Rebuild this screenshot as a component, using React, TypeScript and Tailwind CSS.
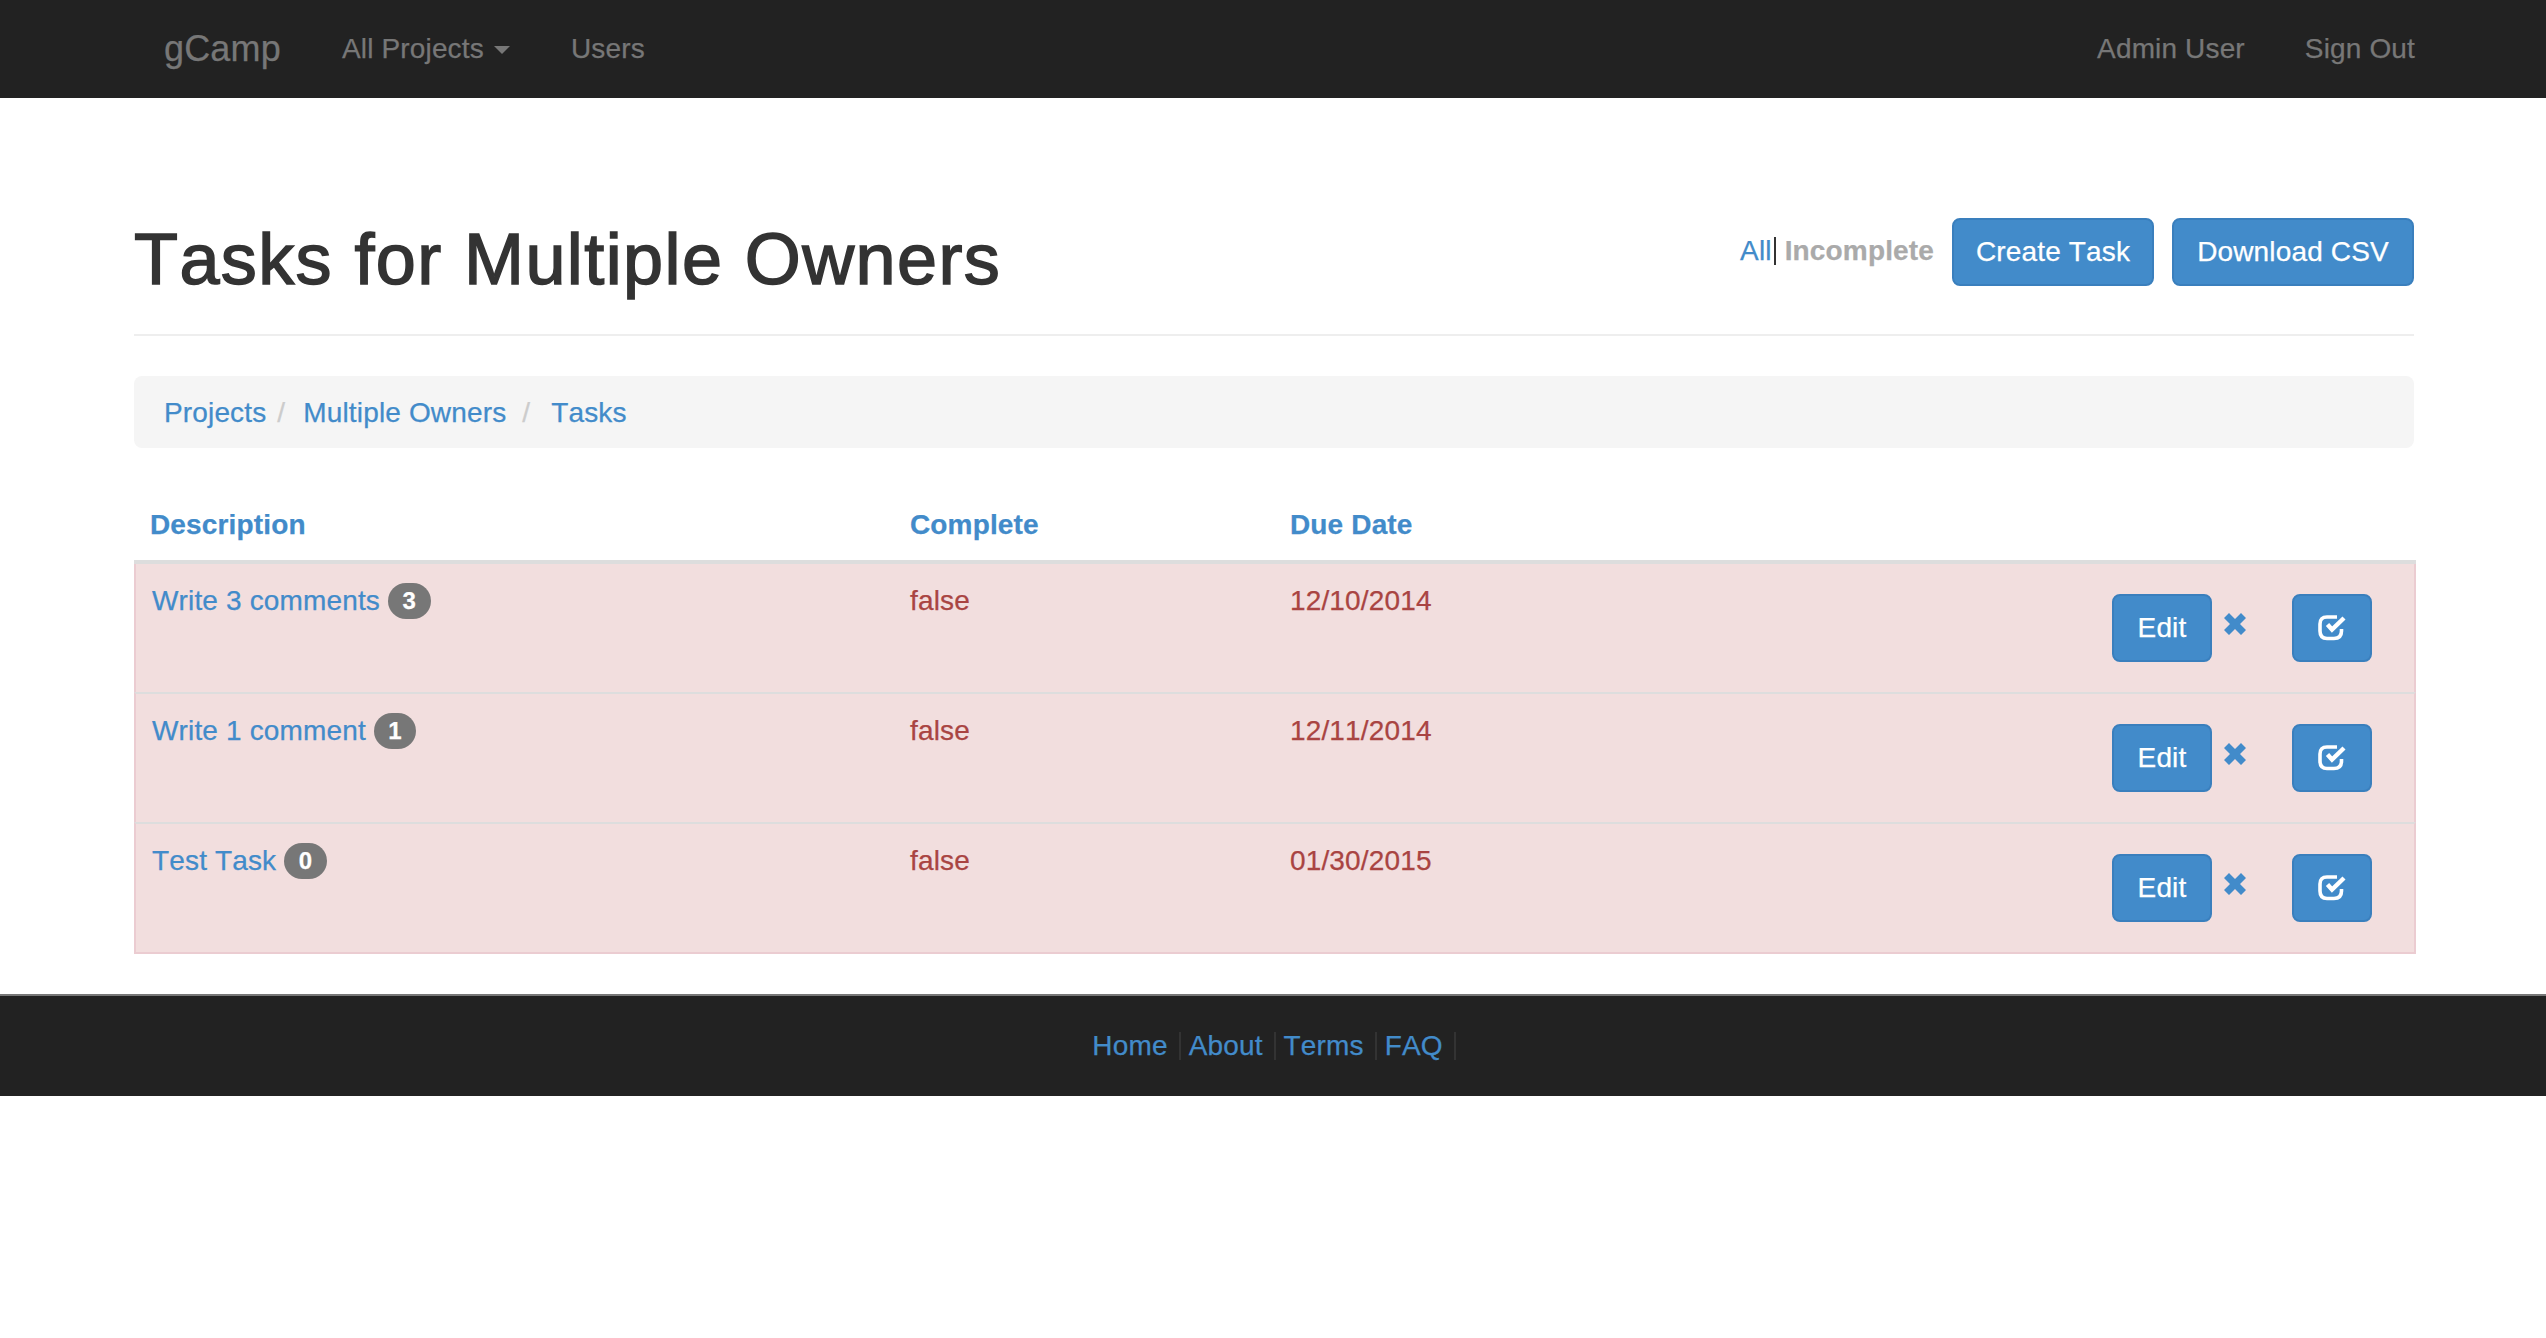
import React from 'react';

const tasks = [
  { name: 'Write 3 comments', count: 3, due: '12/10/2014' },
  { name: 'Write 1 comment', count: 1, due: '12/11/2014' },
  { name: 'Test Task', count: 0, due: '01/30/2015' },
];

const RemoveIcon = () => (
  <svg width="24" height="24" viewBox="0 0 24 24" className="block">
    <path d="M6 1 L12 7 L18 1 L23 6 L17 12 L23 18 L18 23 L12 17 L6 23 L1 18 L7 12 L1 6 Z" fill="#428bca" />
  </svg>
);

const CheckIcon = () => (
  <svg width="28" height="28" viewBox="0 0 28 28" fill="none" className="block">
    <path d="M19 3 H9 Q2 3 2 10 V17 Q2 24.500 9 24.500 H16 Q23.500 24.500 23.500 17 V15" stroke="#fff" strokeWidth="3.6" />
    <path d="M9.500 10.500 L14 15.500 L26 4" stroke="#fff" strokeWidth="4.4" />
  </svg>
);

const buttonClass =
  'h-[68px] rounded-lg border-2 border-[#3a7fbd] bg-[#428bca] text-[28px] text-white flex items-center justify-center';

const App: React.FC = () => {
  return (
    <div className="min-h-[1338px] bg-white font-['Liberation_Sans',Arial,sans-serif] text-[28px] tracking-[0.15px] [font-kerning:none] [-webkit-text-stroke:0.25px] text-[#333]">
      <nav className="h-[98px] bg-[#222] pl-[164px] pr-[131px] flex items-center justify-between text-[#777]">
        <div className="flex items-center">
          <a className="text-[36px] w-[178px]">gCamp</a>
          <a className="flex items-center w-[229px]">
            All Projects
            <span className="ml-[10px] mt-[2px] border-x-[8px] border-t-[8px] border-x-transparent border-t-[#777]" />
          </a>
          <a>Users</a>
        </div>
        <div className="flex items-center gap-[60px]">
          <a>Admin User</a>
          <a>Sign Out</a>
        </div>
      </nav>

      <main className="mx-[134px] w-[2280px]">
        <div className="mt-[120px] pb-[37px] border-b-2 border-[#eee] flex justify-between items-start">
          <h1 className="text-[72px] leading-[79px] pt-[2px] -mb-[2px] tracking-[1.4px] [-webkit-text-stroke:1.5px_#333]">Tasks for Multiple Owners</h1>
          <div className="flex items-start">
            <div className="flex items-center h-[40px] mt-[13px] mr-[18px]">
              <a className="text-[#428bca]">All</a>
              <span className="w-[2px] h-[28px] bg-[#333] ml-[2px] mr-[9px]" />
              <a className="text-[#aaa] font-bold">Incomplete</a>
            </div>
            <button className={`${buttonClass} w-[202px] mr-[18px]`}>Create Task</button>
            <button className={`${buttonClass} w-[242px]`}>Download CSV</button>
          </div>
        </div>

        <div className="mt-[40px] h-[72px] rounded-lg bg-[#f5f5f5] pl-[30px] pt-[2px] flex items-center text-[#428bca]">
          <a>Projects</a>
          <span className="ml-[11px] mr-[18px] text-[#ccc]">/</span>
          <a>Multiple Owners</a>
          <span className="ml-[16px] mr-[21px] text-[#ccc]">/</span>
          <a>Tasks</a>
        </div>

        <table className="mt-[40px] w-[2282px] table-fixed border-separate border-spacing-0">
          <colgroup>
            <col className="w-[760px]" />
            <col className="w-[380px]" />
            <col className="w-[400px]" />
            <col />
          </colgroup>
          <thead>
            <tr className="h-[76px] text-left text-[#428bca]">
              <th className="pl-[16px] pt-[2px] border-b-4 border-[#ddd] font-bold">Description</th>
              <th className="pl-[16px] pt-[2px] border-b-4 border-[#ddd] font-bold">Complete</th>
              <th className="pl-[16px] pt-[2px] border-b-4 border-[#ddd] font-bold">Due Date</th>
              <th className="border-b-4 border-[#ddd]" />
            </tr>
          </thead>
          <tbody className="bg-[#f2dede] text-[#a94442]">
            {tasks.map((task, i) => (
              <tr key={task.name}>
                <td className={`pl-[16px] pt-[16px] align-top border-l-2 border-[#ebccd1] ${i > 0 ? 'border-t-2 border-t-[#ddd]' : ''} ${i === 2 ? 'border-b-2' : ''}`}>
                  <div className="flex items-center">
                    <a className="text-[#428bca]">{task.name}</a>
                    <span className="ml-[8px] h-[36px] min-w-[38px] px-[14.5px] rounded-full bg-[#777] text-white text-[24px] font-bold flex items-center justify-center">
                      {task.count}
                    </span>
                  </div>
                </td>
                <td className={`pl-[16px] pt-[16px] align-top border-[#ebccd1] ${i > 0 ? 'border-t-2 border-t-[#ddd]' : ''} ${i === 2 ? 'border-b-2' : ''}`}>false</td>
                <td className={`pl-[16px] pt-[16px] align-top border-[#ebccd1] ${i > 0 ? 'border-t-2 border-t-[#ddd]' : ''} ${i === 2 ? 'border-b-2' : ''}`}>{task.due}</td>
                <td className={`py-[30px] pr-[42px] border-r-2 border-[#ebccd1] ${i > 0 ? 'border-t-2 border-t-[#ddd]' : ''} ${i === 2 ? 'border-b-2' : ''}`}>
                  <div className="flex justify-end items-start">
                    <button className={`${buttonClass} w-[100px]`}>Edit</button>
                    <a className="ml-[11px] mt-[18px] w-[69px]"><RemoveIcon /></a>
                    <button className={`${buttonClass} w-[80px]`}><CheckIcon /></button>
                  </div>
                </td>
              </tr>
            ))}
          </tbody>
        </table>
      </main>

      <footer className="mt-[40px] h-[102px] pl-[10px] border-t-2 border-[#777] bg-[#222] flex items-center justify-center text-[#428bca]">
        {['Home', 'About', 'Terms', 'FAQ'].map((link) => (
          <div key={link} className="flex items-center">
            <a>{link}</a>
            <span className="ml-[11px] mr-[8px] w-[2px] h-[28px] bg-[#333]" />
          </div>
        ))}
      </footer>
    </div>
  );
};

export default App;
